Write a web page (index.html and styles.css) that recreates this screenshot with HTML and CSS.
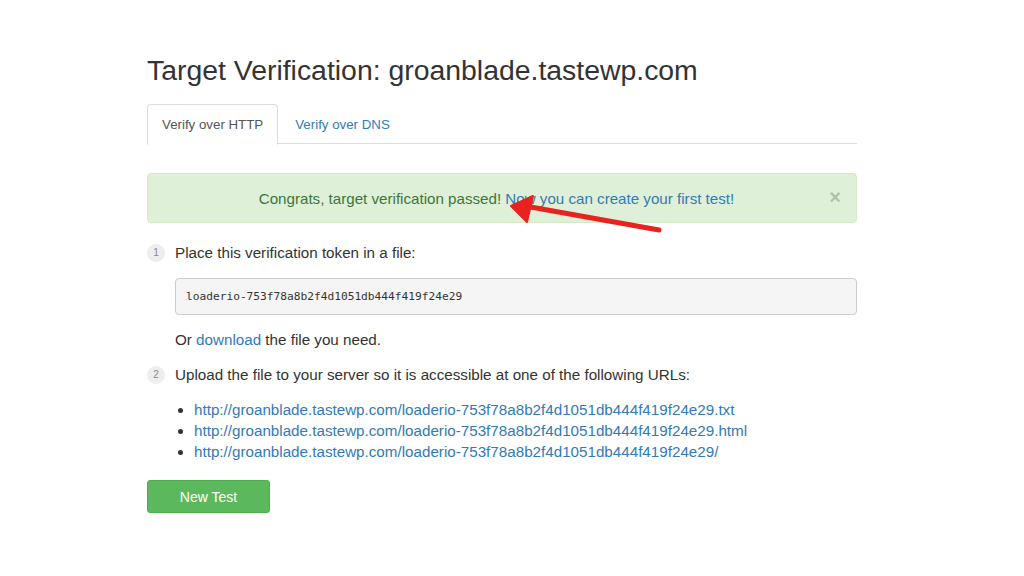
FILE: index.html
```html
<!DOCTYPE html>
<html>
<head>
<meta charset="utf-8">
<link rel="stylesheet" href="styles.css">
</head>
<body>
<div class="page">
  <h1 class="title">Target Verification: groanblade.tastewp.com</h1>
  <ul class="tabs">
    <li class="tab active">Verify over HTTP</li>
    <li class="tab"><a href="#">Verify over DNS</a></li>
  </ul>
  <div class="alert">
    <span>Congrats, target verification passed! <a href="#">Now you can create your first test!</a></span>
    <span class="close">&times;</span>
    <svg class="arrow" width="170" height="50" viewBox="0 0 170 50">
      <line x1="158" y1="44" x2="24" y2="20" stroke="#e8231f" stroke-width="5" stroke-linecap="round"/>
      <polygon points="10,20 32,10 26,36" fill="#e8231f" stroke="#e8231f" stroke-width="2" stroke-linejoin="round"/>
    </svg>
  </div>
  <div class="step">
    <span class="num">1</span>
    <div class="step-body">
      <p class="step-title">Place this verification token in a file:</p>
      <pre class="token">loaderio-753f78a8b2f4d1051db444f419f24e29</pre>
      <p class="note">Or <a href="#">download</a> the file you need.</p>
    </div>
  </div>
  <div class="step">
    <span class="num">2</span>
    <div class="step-body">
      <p class="step-title">Upload the file to your server so it is accessible at one of the following URLs:</p>
      <ul class="urls">
        <li><a href="#">http://groanblade.tastewp.com/loaderio-753f78a8b2f4d1051db444f419f24e29.txt</a></li>
        <li><a href="#">http://groanblade.tastewp.com/loaderio-753f78a8b2f4d1051db444f419f24e29.html</a></li>
        <li><a href="#">http://groanblade.tastewp.com/loaderio-753f78a8b2f4d1051db444f419f24e29/</a></li>
      </ul>
    </div>
  </div>
  <button class="btn">New Test</button>
</div>
</body>
</html>
```
FILE: styles.css
```css
* { box-sizing: border-box; }
html, body { margin: 0; padding: 0; background: #fff; }
body {
  font-family: "Liberation Sans", Arial, sans-serif;
  color: #333;
  font-size: 15.2px;
}
a { color: #337ab7; text-decoration: none; }
.page {
  width: 710px;
  margin-left: 147px;
  padding-top: 54px;
}
.title {
  font-size: 28.4px;
  font-weight: normal;
  margin: 0;
  line-height: 32px;
  color: #333;
}
.tabs {
  list-style: none;
  margin: 18px 0 0 0;
  padding: 0;
  display: flex;
  border-bottom: 1px solid #ddd;
  height: 40px;
}
.tab {
  padding: 0 14px;
  height: 40px;
  line-height: 39px;
  font-size: 13.3px;
  border: 1px solid transparent;
  border-radius: 4px 4px 0 0;
  margin-right: 2px;
}
.tab.active {
  border-color: #ddd;
  border-bottom-color: #fff;
  background: #fff;
  color: #555;
  height: 41px;
}
.alert {
  position: relative;
  margin-top: 29px;
  height: 50px;
  padding-right: 11px;
  background: #dff0d8;
  border: 1px solid #d6e9c6;
  border-radius: 4px;
  color: #3c763d;
  display: flex;
  align-items: center;
  justify-content: center;
  font-size: 15.15px;
}
.alert a { color: #337ab7; }
.close {
  position: absolute;
  right: 15px;
  top: 12px;
  font-size: 20px;
  font-weight: bold;
  color: #000;
  opacity: 0.2;
}
.arrow {
  position: absolute;
  left: 353px;
  top: 12px;
}
.step {
  display: flex;
  margin-top: 20px;
}
.step + .step { margin-top: 15px; }
.num {
  width: 18px;
  height: 18px;
  border-radius: 50%;
  background: #eee;
  color: #888;
  font-size: 10px;
  line-height: 18px;
  text-align: center;
  margin-top: 1px;
  flex: none;
}
.step-body {
  margin-left: 10px;
  flex: 1;
}
.step-title {
  margin: 0;
  line-height: 20px;
}
.token {
  margin: 15px 0 0 0;
  height: 37px;
  line-height: 35px;
  padding: 0 10px;
  background: #f5f5f5;
  border: 1px solid #ccc;
  border-radius: 4px;
  font-family: "DejaVu Sans Mono", "Liberation Mono", monospace;
  font-size: 11.2px;
  color: #333;
}
.note {
  margin: 15px 0 0 0;
  line-height: 20px;
}
.urls {
  margin: 14px 0 0 0;
  padding-left: 19px;
  line-height: 21px;
}
.btn {
  margin-top: 18px;
  width: 123px;
  height: 33px;
  background: #5cb85c;
  border: 1px solid #4cae4c;
  border-radius: 3px;
  color: #fff;
  font-family: "Liberation Sans", Arial, sans-serif;
  font-size: 14px;
}
```
